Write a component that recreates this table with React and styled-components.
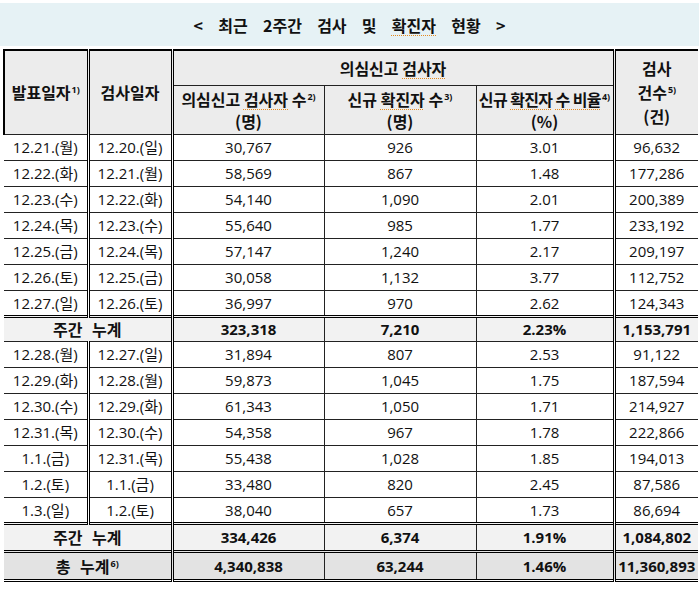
import React from "react";
import styled, { createGlobalStyle } from "styled-components";

const week1 = [
  ["12.21.(월)", "12.20.(일)", "30,767", "926", "3.01", "96,632"],
  ["12.22.(화)", "12.21.(월)", "58,569", "867", "1.48", "177,286"],
  ["12.23.(수)", "12.22.(화)", "54,140", "1,090", "2.01", "200,389"],
  ["12.24.(목)", "12.23.(수)", "55,640", "985", "1.77", "233,192"],
  ["12.25.(금)", "12.24.(목)", "57,147", "1,240", "2.17", "209,197"],
  ["12.26.(토)", "12.25.(금)", "30,058", "1,132", "3.77", "112,752"],
  ["12.27.(일)", "12.26.(토)", "36,997", "970", "2.62", "124,343"],
];

const week2 = [
  ["12.28.(월)", "12.27.(일)", "31,894", "807", "2.53", "91,122"],
  ["12.29.(화)", "12.28.(월)", "59,873", "1,045", "1.75", "187,594"],
  ["12.30.(수)", "12.29.(화)", "61,343", "1,050", "1.71", "214,927"],
  ["12.31.(목)", "12.30.(수)", "54,358", "967", "1.78", "222,866"],
  ["1.1.(금)", "12.31.(목)", "55,438", "1,028", "1.85", "194,013"],
  ["1.2.(토)", "1.1.(금)", "33,480", "820", "2.45", "87,586"],
  ["1.3.(일)", "1.2.(토)", "38,040", "657", "1.73", "86,694"],
];

const DayRow = ({ row }) => (
  <DayTr>
    {row.map((v, i) => (
      <Cell key={i} $col={i}>{v}</Cell>
    ))}
  </DayTr>
);

const SumRow = ({ label, values, tone, height, note }) => (
  <SumTr $tone={tone} $h={height}>
    <SumLabel colSpan={2}>
      {label}
      {note && <Note>{note}</Note>}
    </SumLabel>
    {values.map((v, i) => (
      <SumCell key={i} $col={i + 2}>{v}</SumCell>
    ))}
  </SumTr>
);

export default function App() {
  return (
    <Page>
      <GlobalStyle />
      <TitleBar>
        {"<  최근  2주간  검사  및  "}
        <Spell>확진자</Spell>
        {"  현황  >"}
      </TitleBar>

      <Table>
        <colgroup>
          <col style={{ width: 84 }} />
          <col style={{ width: 84 }} />
          <col style={{ width: 152 }} />
          <col style={{ width: 152 }} />
          <col style={{ width: 138 }} />
          <col style={{ width: 84 }} />
        </colgroup>
        <thead>
          <HeadTr $h={35}>
            <Head rowSpan={2} $col={0}>
              발표일자<Note>1)</Note>
            </Head>
            <Head rowSpan={2} $col={1}>검사일자</Head>
            <Head colSpan={3} $col={2}>
              의심신고 <Spell>검사자</Spell>
            </Head>
            <Head rowSpan={2} $col={5} $lh={24}>
              검사
              <br />
              건수<Note>5)</Note>
              <br />
              <Unit>(건)</Unit>
            </Head>
          </HeadTr>
          <HeadTr $h={49}>
            <Head $col={2}>
              의심신고 <Spell>검사자</Spell> 수<Note>2)</Note>
              <br />
              <Unit>(명)</Unit>
            </Head>
            <Head $col={3}>
              신규 <Spell>확진자</Spell> 수<Note>3)</Note>
              <br />
              <Unit>(명)</Unit>
            </Head>
            <Head $col={4} $tight>
              신규 <Spell>확진자</Spell> <Spell>수 비율</Spell>
              <Note>4)</Note>
              <br />
              <Unit>(%)</Unit>
            </Head>
          </HeadTr>
        </thead>
        <tbody>
          {week1.map((r) => (
            <DayRow key={r[0]} row={r} />
          ))}
          <SumRow
            label="주간 누계"
            values={["323,318", "7,210", "2.23%", "1,153,791"]}
            tone="#f2f2f2"
            height={25}
          />
          {week2.map((r) => (
            <DayRow key={r[0]} row={r} />
          ))}
          <SumRow
            label="주간 누계"
            values={["334,426", "6,374", "1.91%", "1,084,802"]}
            tone="#f2f2f2"
            height={28}
          />
          <SumRow
            label="총 누계"
            note="6)"
            values={["4,340,838", "63,244", "1.46%", "11,360,893"]}
            tone="#e3e3e3"
            height={29}
          />
        </tbody>
      </Table>
    </Page>
  );
}

const GlobalStyle = createGlobalStyle`
  body {
    margin: 0;
    background: #fff;
    font-family: "Open Sans", "Noto Sans CJK KR", sans-serif;
    color: #111;
  }
`;

const Page = styled.div`
  width: 699px;
  padding-top: 3px;
`;

const TitleBar = styled.div`
  height: 43px;
  background: #e6f2f5;
  display: flex;
  align-items: center;
  justify-content: center;
  white-space: pre;
  font-family: "Noto Sans CJK KR", sans-serif;
  font-weight: 700;
  font-size: 16px;
  word-spacing: 4px;
`;

const Spell = styled.span`
  text-decoration: underline dotted #e58a1f;
  text-decoration-thickness: 1px;
  text-underline-offset: 3px;
`;

const Note = styled.sup`
  font-family: "Open Sans", sans-serif;
  font-size: 9px;
  font-weight: 700;
  vertical-align: 6px;
  line-height: 0;
  margin-left: 1px;
  letter-spacing: 0;
`;

const Unit = styled.span`
  font-weight: 700;
  letter-spacing: 0;
`;

const doubleAfter = [0, 1, 4];

const Table = styled.table`
  margin: 3px 0 0 3px;
  width: 694px;
  table-layout: fixed;
  border-collapse: collapse;
  border-top: 2px solid #000;
  border-bottom: 3px double #000;
`;

const HeadTr = styled.tr`
  height: ${(p) => p.$h}px;
  background: #ececec;
`;

const Head = styled.th`
  padding: 0;
  text-align: center;
  vertical-align: middle;
  font-family: "Noto Sans CJK KR", sans-serif;
  font-size: 16px;
  font-weight: 700;
  line-height: ${(p) => p.$lh || 22}px;
  white-space: nowrap;
  letter-spacing: ${(p) => (p.$tight ? "-0.6px" : "0")};
  border-bottom: 1px solid #222;
  border-left: ${(p) =>
    p.$col === 0
      ? "2px solid #000"
      : doubleAfter.includes(p.$col - 1)
      ? "3px double #000"
      : "1px solid #222"};
`;

const DayTr = styled.tr`
  height: 26px;
`;

const Cell = styled.td`
  padding: 0;
  text-align: center;
  vertical-align: middle;
  font-size: 15px;
  line-height: 14px;
  white-space: nowrap;
  border-bottom: 1px solid #222;
  border-left: ${(p) =>
    p.$col === 0
      ? "none"
      : doubleAfter.includes(p.$col - 1)
      ? "3px double #000"
      : "1px solid #222"};
`;

const SumTr = styled.tr`
  height: ${(p) => p.$h}px;
  background: ${(p) => p.$tone};
  border-top: 3px double #000;
`;

const SumLabel = styled.td`
  padding: 0;
  text-align: center;
  vertical-align: middle;
  font-family: "Noto Sans CJK KR", sans-serif;
  font-size: 16px;
  font-weight: 700;
  line-height: 14px;
  word-spacing: 6px;
  border-bottom: 1px solid #222;
`;

const SumCell = styled(Cell)`
  font-weight: 700;
`;
